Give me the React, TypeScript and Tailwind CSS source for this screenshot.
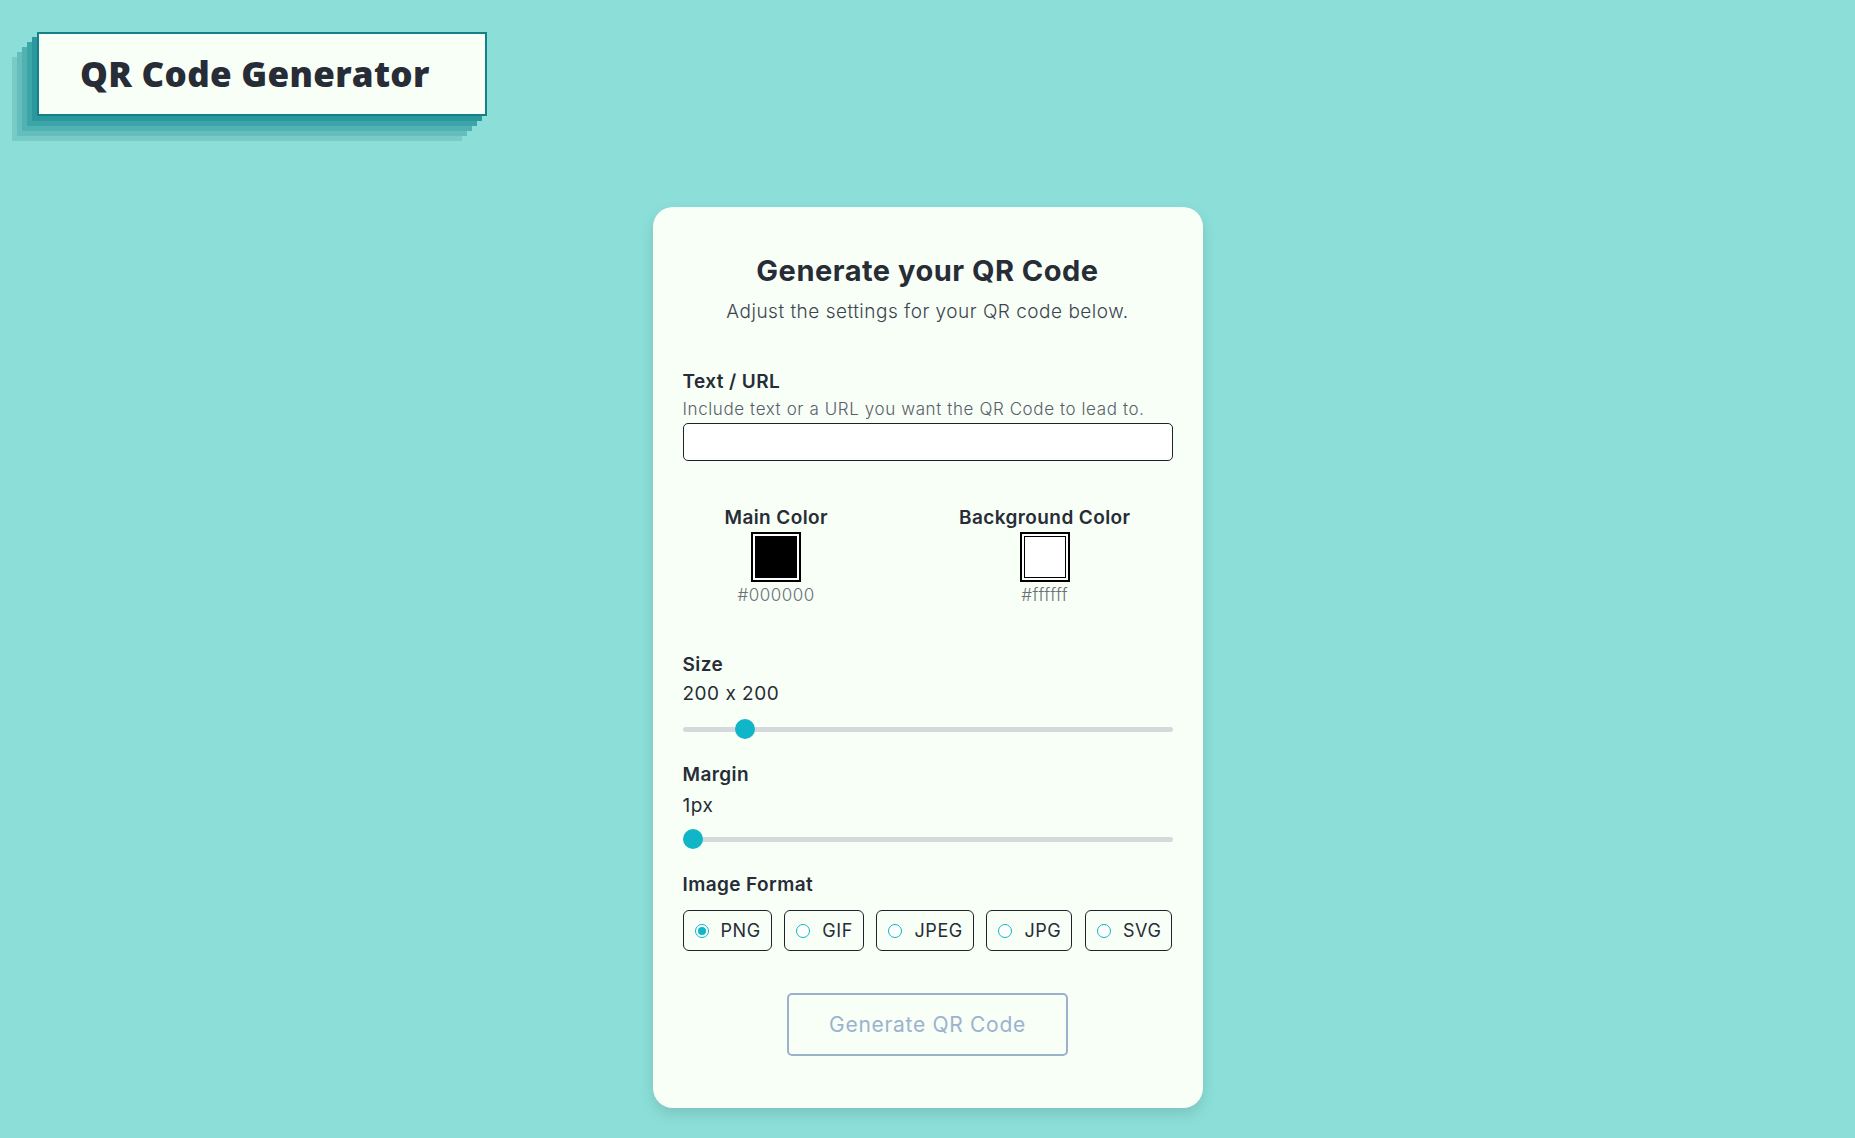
import { useState } from 'react'

const formats = ['PNG', 'GIF', 'JPEG', 'JPG', 'SVG']

function Slider({ pct }: { pct: number }) {
  return (
    <div className="relative h-5 w-full">
      <div className="absolute left-0 right-0 top-[8px] h-[5px] rounded-full bg-[#d5d9db]" />
      <div
        className="absolute top-0 h-5 w-5 rounded-full bg-[#10b5c8]"
        style={{ left: `calc((100% - 20px) * ${pct})` }}
      />
    </div>
  )
}

function Swatch({ color, label, hex }: { color: string; label: string; hex: string }) {
  return (
    <div className="flex flex-col items-center">
      <span className="text-[19px] font-semibold leading-6 tracking-[0.4px] text-[#272c36]">{label}</span>
      <div className="mt-[2px] h-[50px] w-[50px] border-2 border-black bg-white p-[2px]">
        <div className={`h-full w-full ${color}`} />
      </div>
      <span className="mt-[3px] text-[17px] font-light leading-5 tracking-[0.5px] text-[#6b7075]">{hex}</span>
    </div>
  )
}

export default function App() {
  const [format, setFormat] = useState('PNG')

  return (
    <div className="min-h-[1138px] w-full bg-[#8bdfd8] font-['Inter',sans-serif] [font-feature-settings:'calt'_0]">
      {/* Logo */}
      <div className="pl-[37px] pt-[32px]">
        <div className="flex h-[84px] w-[450px] items-center border-2 border-[#13808a] bg-[#f7fff7] pl-[41px] shadow-[-5px_5px_0_#2a989d,-10px_10px_0_#3ca5a7,-15px_15px_0_#50b2b2,-20px_20px_0_#64bebc,-25px_25px_0_#78cbc6]">
          <h1 className="font-['Open_Sans',sans-serif] text-[35px] font-extrabold tracking-[0.3px] text-[#272c36]">
            QR Code Generator
          </h1>
        </div>
      </div>

      {/* Card */}
      <div className="flex justify-center pt-[91px] pb-[30px]">
        <div className="w-[550px] rounded-[20px] bg-[#f7fff7] px-[30px] pt-[47px] pb-[52px] shadow-[0_6px_14px_rgba(0,0,0,0.12)]">
          <h2 className="text-center text-[29px] font-bold leading-[34px] tracking-[0.5px] text-[#272c36]">
            Generate your QR Code
          </h2>
          <p className="mt-[12px] text-center text-[19px] font-light leading-6 tracking-[0.5px] text-[#3d4450]">
            Adjust the settings for your QR code below.
          </p>

          <div className="mt-[46px]">
            <label className="block text-[19px] font-semibold leading-6 tracking-[0.4px] text-[#272c36]">Text / URL</label>
            <p className="mt-[5px] text-[17px] font-light leading-5 tracking-[0.6px] text-[#5a606a]">
              Include text or a URL you want the QR Code to lead to.
            </p>
            <input
              type="text"
              className="mt-[4px] h-[38px] w-full rounded-[5px] border border-[#1f2329] bg-white px-2 outline-none"
            />
          </div>

          <div className="mt-[45px] flex justify-between px-[42px]">
            <Swatch color="bg-black" label="Main Color" hex="#000000" />
            <Swatch color="bg-white border border-black" label="Background Color" hex="#ffffff" />
          </div>

          <div className="mt-[48px]">
            <label className="block text-[19px] font-semibold leading-6 tracking-[0.4px] text-[#272c36]">Size</label>
            <p className="mt-[5px] text-[19px] leading-6 tracking-[0.5px] text-[#272c36]">200 x 200</p>
            <div className="mt-[13px]">
              <Slider pct={0.111} />
            </div>
          </div>

          <div className="mt-[24px]">
            <label className="block text-[19px] font-semibold leading-6 tracking-[0.4px] text-[#272c36]">Margin</label>
            <p className="mt-[7px] text-[19px] leading-6 tracking-[0.5px] text-[#272c36]">1px</p>
            <div className="mt-[11px]">
              <Slider pct={0} />
            </div>
          </div>

          <div className="mt-[24px]">
            <label className="block text-[19px] font-semibold leading-6 tracking-[0.4px] text-[#272c36]">Image Format</label>
            <div className="mt-[13px] flex justify-between">
              {formats.map((f) => (
                <button
                  key={f}
                  onClick={() => setFormat(f)}
                  className="flex h-[41px] items-center gap-[12px] rounded-[6px] border border-[#1f2329] pl-[11px] pr-[10px]"
                >
                  <span className="flex h-[14px] w-[14px] items-center justify-center rounded-full border-[1.5px] border-[#10b5c8] bg-white">
                    {format === f && <span className="h-[8px] w-[8px] rounded-full bg-[#10b5c8]" />}
                  </span>
                  <span className="text-[18px] leading-6 tracking-[0.6px] text-[#272c36]">{f}</span>
                </button>
              ))}
            </div>
          </div>

          <div className="mt-[42px] flex justify-center">
            <button className="h-[63px] w-[281px] rounded-[5px] border-2 border-[#9db0cc] text-[21px] tracking-[0.7px] text-[#9db2cf]">
              Generate QR Code
            </button>
          </div>
        </div>
      </div>
    </div>
  )
}
